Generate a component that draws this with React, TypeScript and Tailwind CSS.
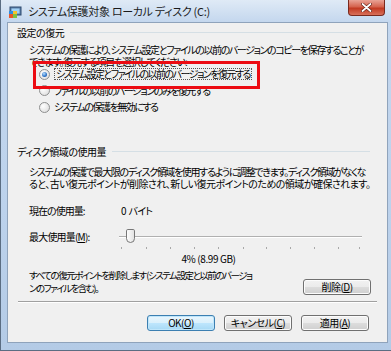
const jp = "font-['Noto_Sans_CJK_JP','Noto_Sans',sans-serif] [font-feature-settings:'palt']";

function Btn({ label, def, className = '' }: { label: React.ReactNode; def?: boolean; className?: string }) {
  return (
    <div
      className={`h-[16px] w-[68px] rounded-[3px] border flex items-center justify-center text-[10px] leading-none tracking-[-0.5px] text-black ${
        def
          ? 'border-[#3c7fb1] bg-[linear-gradient(#eaf6fd,#d9f0fc_50%,#bee6fd_50%,#a7d9f5)] shadow-[inset_0_0_0_1px_#bfe6fb]'
          : 'border-[#707070] bg-[linear-gradient(#f2f2f2,#ebebeb_50%,#dddddd_50%,#cfcfcf)] shadow-[inset_0_0_0_1px_#fcfcfc]'
      } ${className}`}
    >
      {label}
    </div>
  );
}

function Radio({ checked }: { checked?: boolean }) {
  return (
    <span className="w-[11px] h-[11px] rounded-full border border-[#8e8f8f] bg-[radial-gradient(circle_at_35%_35%,#ffffff,#d8d8d8)] flex items-center justify-center shrink-0">
      {checked && (
        <span className="w-[5px] h-[5px] rounded-full bg-[radial-gradient(circle_at_40%_35%,#b9e0ff,#2b71c6_60%,#1a4f96)]" />
      )}
    </span>
  );
}

function GroupHeader({ title }: { title: string }) {
  return (
    <div className="h-[20px] flex items-center pl-[9px] pr-[17px] gap-[6px]">
      <span className="text-[10px] leading-none tracking-[-0.5px]">{title}</span>
      <span className="flex-1 h-[2px] border-t border-[#d5dfe5] border-b-white" />
    </div>
  );
}

const ticks = [120, 145, 169, 193, 217, 242, 265, 289, 313, 337, 358];

export default function App() {
  return (
    <div className={`w-[391px] h-[351px] ${jp} text-black relative overflow-hidden bg-[linear-gradient(180deg,#dfeaf6,#c4d7ee_22px,#bcd2ec_60%,#b4cbe6)] border-b border-l border-[#5b6d82]`}>
      {/* title bar */}
      <div className="h-[22px] flex items-center pl-[8px] relative">
        <svg width="14" height="14" viewBox="0 0 14 14">
          <rect x="1" y="3" width="11" height="8" fill="#5b7fa8" stroke="#2e4a6e" strokeWidth="1" />
          <rect x="2.5" y="4.5" width="8" height="5" fill="#9fd0f4" />
          <rect x="0" y="10" width="4" height="4" fill="#e8562a" />
          <rect x="4" y="10" width="4" height="4" fill="#7cc242" />
          <rect x="0" y="7" width="4" height="3" fill="#2f8ee0" />
          <rect x="4" y="7" width="4" height="3" fill="#f6c32c" />
        </svg>
        <span className="ml-[5px] text-[11px] leading-none tracking-[-0.3px] text-[#1a1a1a]">
          システム保護対象 ローカル ディスク (C:)
        </span>
        <div className="absolute right-[6px] top-0 w-[37px] h-[16px] rounded-b-[4px] border border-t-0 border-[#7a2a1e] bg-[linear-gradient(#e9a396,#d5634e_45%,#c23a22_55%,#d8705a)] flex items-center justify-center">
          <svg width="11" height="9" viewBox="0 0 11 9">
            <path d="M1.5 1 L9.5 8 M9.5 1 L1.5 8" stroke="#5a1a10" strokeWidth="3" strokeLinecap="round" />
            <path d="M1.5 1 L9.5 8 M9.5 1 L1.5 8" stroke="#ffffff" strokeWidth="1.8" strokeLinecap="round" />
          </svg>
        </div>
      </div>

      {/* client area */}
      <div className="ml-[6px] w-[381px] h-[321px] bg-[#f0f0f0] border border-[#8fa3bb] relative">
        <GroupHeader title="設定の復元" />
        <div className="mt-[1px] pl-[21px] text-[10px] leading-[12px] whitespace-nowrap">
          <div className="tracking-[-1.4px]">システムの保護により、システム設定とファイルの以前のバージョンのコピーを保存することが</div>
          <div className="tracking-[-1.2px]">できます。復元する項目を選択してください:</div>
        </div>
        <div className="mt-[-2px] pl-[31px] text-[10px] leading-none tracking-[-1.5px]">
          <div className="h-[16px] flex items-center gap-[4px]">
            <Radio checked />
            <span className="border border-dotted border-[#555] px-[1px]">システム設定とファイルの以前のバージョンを復元する</span>
          </div>
          <div className="h-[17px] flex items-center gap-[4px]">
            <Radio />
            <span>ファイルの以前のバージョンのみを復元する</span>
          </div>
          <div className="h-[16px] flex items-center gap-[4px]">
            <Radio />
            <span>システムの保護を無効にする</span>
          </div>
        </div>

        <div className="mt-[27px]">
          <GroupHeader title="ディスク領域の使用量" />
        </div>
        <div className="mt-[4px] pl-[21px] text-[10px] leading-[12px] whitespace-nowrap">
          <div className="tracking-[-1.35px]">システムの保護で最大限のディスク領域を使用するように調整できます。ディスク領域がなくな</div>
          <div className="tracking-[-0.55px]">ると、古い復元ポイントが削除され、新しい復元ポイントのための領域が確保されます。</div>
        </div>

        <div className="mt-[13px] h-[16px] flex items-center pl-[21px] text-[10px] leading-none">
          <span className="w-[92px] tracking-[-1px]">現在の使用量:</span>
          <span className="tracking-[-0.8px]">0&nbsp; バイト</span>
        </div>
        <div className="mt-[8px] h-[20px] flex items-center pl-[21px] text-[10px] leading-none">
          <span className="w-[90px] tracking-[-0.8px]">最大使用量(<u>M</u>):</span>
          <div className="relative w-[243px] h-[20px] flex items-center">
            <div className="w-full h-[2px] border-t border-[#b0b0b0] border-b border-b-white" />
            <div className="absolute left-[7px] top-[2px] w-[9px] h-[14px] rounded-b-[5px] rounded-t-[2px] border border-[#777] bg-[linear-gradient(90deg,#fdfdfd,#e3e3e3)]" />
          </div>
        </div>
        <div className="mt-[-1px] h-[4px] relative">
          {ticks.map((x) => (
            <span key={x} className="absolute top-[1px] w-px h-[2px] bg-[#a8a8a8]" style={{ left: x - 7 }} />
          ))}
        </div>
        <div className="mt-[3px] h-[12px] flex justify-center pl-[22px] text-[10px] leading-[12px] tracking-[-0.4px]">
          4% (8.99 GB)
        </div>

        <div className="flex items-start pl-[21px]">
          <div className="mt-[4px] w-[260px] text-[9.5px] leading-[13px] whitespace-nowrap tracking-[-1.5px]">
            <div>すべての復元ポイントを削除します (システム設定と以前のバージョ</div>
            <div>ンのファイルを含む)。</div>
          </div>
          <Btn className="ml-auto mr-[16px] mt-[14px]" label={<>削除(<u>D</u>)</>} />
        </div>

        <div className="mt-[6px] mx-[10px] h-[2px] border-t border-[#a0a0a0] border-b border-b-white" />

        <div className="mt-[12px] flex justify-end gap-[9px] pr-[18px]">
          <Btn def label={<>OK(<u>O</u>)</>} />
          <Btn label={<>キャンセル(<u>C</u>)</>} />
          <Btn label={<>適用(<u>A</u>)</>} />
        </div>
      </div>

      {/* annotation */}
      <div className="absolute left-[32px] top-[61px] w-[227px] h-[28px] border-[3px] border-[#ec0b12]" />
    </div>
  );
}
